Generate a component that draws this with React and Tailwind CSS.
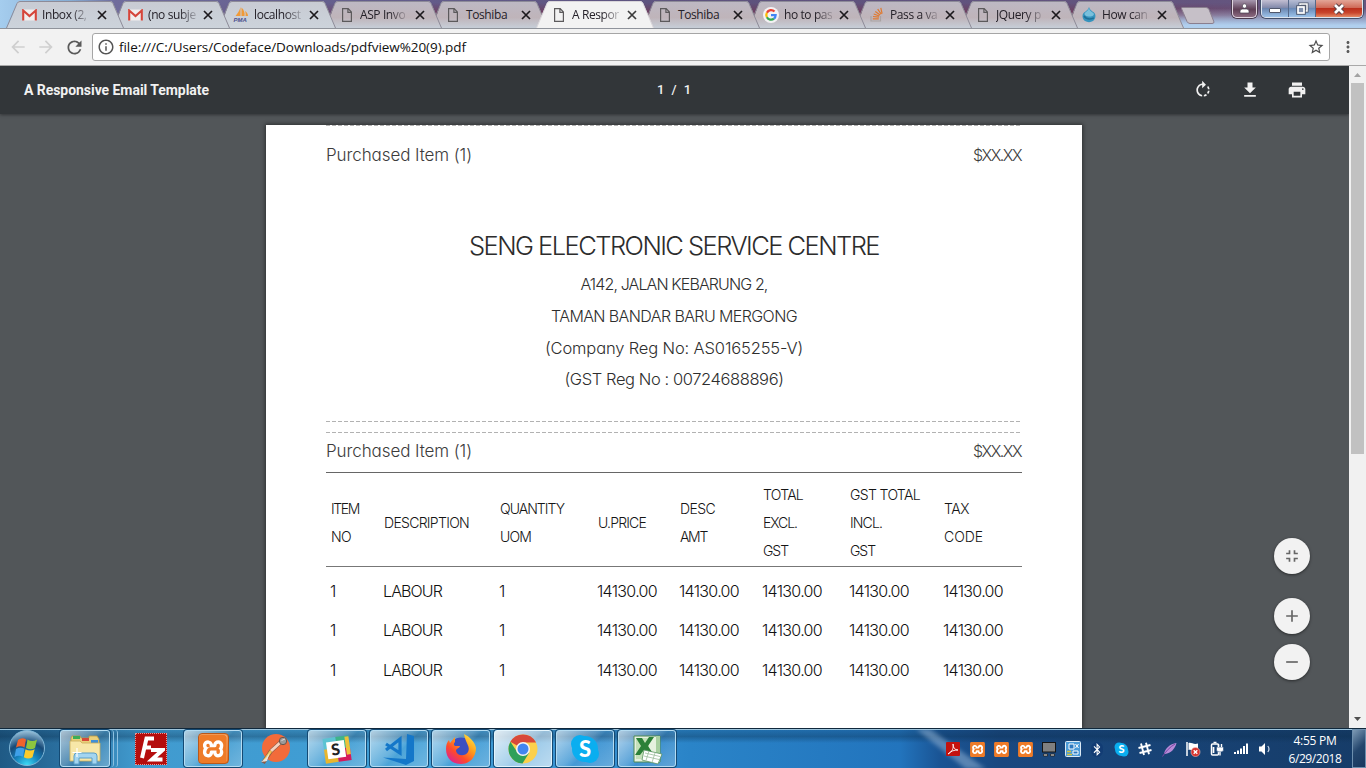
import { useLayoutEffect, useRef } from "react";
import {
  MdArrowBack,
  MdArrowForward,
  MdRefresh,
  MdInfoOutline,
  MdStarBorder,
  MdMoreVert,
  MdRotateRight,
  MdGetApp,
  MdPrint,
  MdFullscreenExit,
  MdAdd,
  MdRemove,
} from "react-icons/md";
import { FaBluetoothB } from "react-icons/fa";
import { SiXampp } from "react-icons/si";

/* Text spread over a fixed measure: the tracking is derived from the natural width. */
function Fit({ w, className = "", children }) {
  const ref = useRef(null);
  useLayoutEffect(() => {
    const el = ref.current;
    el.style.letterSpacing = "0px";
    const natural = el.getBoundingClientRect().width;
    el.style.letterSpacing = (w - natural) / children.length + "px";
  }, [w, children]);
  return (
    <span ref={ref} className={"inline-block whitespace-nowrap " + className}>
      {children}
    </span>
  );
}

/* ---------- tab icons ---------- */
const Gmail = () => (
  <svg width="15" height="12" viewBox="0 0 15 12">
    <rect x="0.5" y="0.5" width="14" height="11" rx="1" fill="#f1eeee" />
    <path d="M1.2 11.5V1.5L7.5 7l6.3-5.500v10" fill="none" stroke="#d5453a" strokeWidth="2.1" />
  </svg>
);
const Doc = () => (
  <svg width="12" height="14" viewBox="0 0 12 14" fill="none" stroke="#5c5a5c" strokeWidth="1.2">
    <path d="M1.600.7h5.600L10.400 4v9.300H1.600zM6.900.9v3.500h3.500" />
  </svg>
);
const Pma = () => (
  <svg width="17" height="15" viewBox="0 0 17 15">
    <path d="M7.500 0v9H2.500C4.500 6.500 6.500 4 7.500 0zM8.500.5C11 2.500 12 6 11.500 9H8.500zM12 4c2 1 3 3 3 5h-2.500c.3-2 .2-3.500-.5-5z" fill="#f09a38" />
    <text x="0.500" y="14.800" fontSize="6" fontWeight="700" fontStyle="italic" fontFamily="Liberation Sans, sans-serif" fill="#4a4f8c">
      PMA
    </text>
  </svg>
);
const Google = () => (
  <svg width="16" height="16" viewBox="0 0 16 16" fill="none" strokeWidth="2.300">
    <circle cx="8" cy="8" r="8" fill="#f4f2f4" />
    <path d="M11.500 4.500A4.700 4.700 0 0 0 3.900 5.700" stroke="#ea4335" />
    <path d="M3.900 5.700a4.700 4.700 0 0 0 0 4.600" stroke="#fbbc05" />
    <path d="M3.900 10.300a4.700 4.700 0 0 0 7.100 1.300" stroke="#34a853" />
    <path d="M11 11.600A4.700 4.700 0 0 0 12.600 8.200H8" stroke="#4285f4" />
  </svg>
);
const Stack = () => (
  <svg width="14" height="15" viewBox="0 0 14 15" fill="none">
    <path d="M1 9v5h9.500V9" stroke="#a9a3a3" strokeWidth="1.200" />
    <path d="M2.800 11.800h6M3 9.500l5.900.7M3.700 7l5.600 2M5.300 4.500l4.800 3.500M7.700 2.200l3.500 4.900M10.800.8l1.300 5.800" stroke="#e0792f" strokeWidth="1.200" />
  </svg>
);
const Drop = () => (
  <svg width="16" height="16" viewBox="0 0 16 16">
    <path d="M8 0c.8 3 3 4 5 5.500 2.500 2 1.500 7-1 8.500-2.500 1.500-5.500 1.500-8 0C1.500 12.500.500 7.500 3 5.500 5 4 7.200 3 8 0z" fill="#3593bd" />
    <path d="M8 1c.6 3 3 4 4.500 5.300C14 8 11 10 7.500 9.500 4 9 3 7 3.800 6 5 4.500 7.300 3.500 8 1z" fill="#79c0dc" />
    <path d="M3 9c2 3 6 3.500 9.800 2" stroke="#1d6f98" strokeWidth="1.500" fill="none" />
  </svg>
);

const tabs = [
  { icon: Gmail, title: "Inbox (2," },
  { icon: Gmail, title: "(no subje" },
  { icon: Pma, title: "localhost" },
  { icon: Doc, title: "ASP Invo" },
  { icon: Doc, title: "Toshiba" },
  { icon: Doc, title: "A Respor", active: true },
  { icon: Doc, title: "Toshiba" },
  { icon: Google, title: "ho to pas" },
  { icon: Stack, title: "Pass a va" },
  { icon: Doc, title: "JQuery p" },
  { icon: Drop, title: "How can" },
];

function Tab({ icon: Icon, title, active, order }) {
  const fade = title === "Toshiba" ? "" : " [mask-image:linear-gradient(to_right,black_65%,transparent_110%)]";
  return (
    <div className="relative h-[29px] w-[106px] shrink-0" style={{ zIndex: active ? 30 : 20 - order }}>
      <svg className="absolute left-0 top-0" width="119" height="29" viewBox="0 0 119 29">
        <path
          d={active ? "M0 29L11 3Q12 1 14 1H104Q106 1 107 3L118 29Z" : "M6.500 16L11 3Q12 1 14 1H104Q106 1 107 3L118 28.500H0.500Z"}
          fill={active ? "#f2f2f2" : order < 3 ? "url(#tabCool)" : "url(#tabGlass)"}
        />
        <path d="M0.500 28L11 3.500Q12 1.500 14 1.500H104Q106 1.500 107 3.500L117.500 28" fill="none" stroke={active ? "#d9d6da" : "#8d8b98"} strokeWidth="1" />
      </svg>
      <div className="relative flex h-[29px] items-center pl-[14px]">
        <span className="flex w-[18px] items-center justify-center">
          <Icon />
        </span>
        <span className="ml-[4px] w-[50px] shrink-0">
          <span className={"block w-max whitespace-nowrap text-[12px] tracking-[-0.4px] text-[#252129]" + fade}>{title}</span>
        </span>
        <svg className="ml-[5px] mt-px shrink-0" width="10" height="10" viewBox="0 0 10 10" stroke={active ? "#3c3c3c" : "#1c191d"} strokeWidth="1.700">
          <path d="M1 1l8 8M9 1L1 9" />
        </svg>
      </div>
    </div>
  );
}

function TabStrip() {
  return (
    <div className="relative flex h-[29px] overflow-hidden border-b border-[#8f939b] bg-[linear-gradient(to_right,#a5cdee_0,#86add4_70px,#706c9c_115px,#65608f_300px,#5d527d_700px,#66557f_1366px)] pl-[6px]">
      <div className="absolute inset-0 bg-[linear-gradient(to_bottom,transparent_10%,#7a3048_55%,#a8c8e8_100%)] opacity-75 [mask-image:linear-gradient(to_right,transparent_14%,black_30%,black_84%,#0008_90%,transparent)]" />
      <div className="absolute right-0 top-0 h-full w-[190px] bg-[linear-gradient(to_bottom,transparent_30%,#b0cfee_90%)]" />
      <svg className="absolute" width="0" height="0">
        <defs>
          <linearGradient id="tabCool" x1="0" y1="0" x2="0" y2="1">
            <stop offset="0" stopColor="#c8cbd3" />
            <stop offset="1" stopColor="#ccd3db" />
          </linearGradient>
          <linearGradient id="tabGlass" x1="0" y1="0" x2="0" y2="1">
            <stop offset="0" stopColor="#bdb9c4" />
            <stop offset="0.600" stopColor="#bfb4ba" />
            <stop offset="1" stopColor="#c7cfd9" />
          </linearGradient>
        </defs>
      </svg>
      {tabs.map((t, i) => (
        <Tab key={i} order={i} {...t} />
      ))}
      <svg className="relative ml-[8px] mt-[7px]" width="36" height="18" viewBox="0 0 36 18">
        <path d="M1.500 1.500Q1 .5 3 .5H26Q28 .5 29 2.500L34 15Q34 16.500 32 16.500H10Q8 16.500 7 14.500Z" fill="#c6c0c8" stroke="#8a7f8f" />
      </svg>
      <div className="absolute right-[3px] top-0 flex gap-[2px]">
        <div className="flex h-[18px] w-[25px] items-center justify-center rounded-b-[5px] border border-t-0 border-[#e0d5df] bg-[linear-gradient(#a697ae,#5f3f56_55%,#8b6a80)] ring-1 ring-[#4a3a4e]">
          <svg width="11" height="11" viewBox="0 0 11 11" fill="#fff" stroke="#4c4454" strokeWidth=".7">
            <circle cx="5.500" cy="3" r="2.200" />
            <path d="M1 10V8q0-2 2.500-2h4Q10 6 10 8v2z" />
          </svg>
        </div>
        <div className="ml-[2px] flex h-[18px] w-[102px] overflow-hidden rounded-b-[5px] border border-t-0 border-[#dde4ef] ring-1 ring-[#44506a]">
          <div className="flex w-[27px] items-center justify-center border-r border-[#56698a] bg-[linear-gradient(#c3bfd2,#7e86a8_48%,#6c86b0_50%,#9cc3ea)]">
            <div className="mt-[3px] h-[5px] w-[12px] rounded-[1px] border border-[#50576b] bg-white" />
          </div>
          <div className="flex w-[27px] items-center justify-center border-r border-[#56698a] bg-[linear-gradient(#b7bdd4,#7e8fb2_48%,#6a8ab8_50%,#9cc3ea)]">
            <svg width="14" height="14" viewBox="0 0 14 14" fill="none">
              <path d="M5 3V2h7v7h-2" stroke="#4c5468" strokeWidth="3" />
              <path d="M5 3V2h7v7h-2" stroke="#fff" strokeWidth="1.500" />
              <rect x="3" y="5" width="6" height="6" stroke="#4c5468" strokeWidth="3.500" />
              <rect x="3" y="5" width="6" height="6" fill="#7f90ae" stroke="#fff" strokeWidth="1.700" />
            </svg>
          </div>
          <div className="flex grow items-center justify-center bg-[linear-gradient(#e3a597,#cf6a58_45%,#bb2f1c_50%,#c9452c_75%,#e58b66)]">
            <svg width="14" height="12" viewBox="0 0 14 12" fill="none">
              <path d="M3 2l8 8M11 2l-8 8" stroke="#5d4045" strokeWidth="4.600" />
              <path d="M3 2l8 8M11 2l-8 8" stroke="#fff" strokeWidth="2.700" />
            </svg>
          </div>
        </div>
      </div>
    </div>
  );
}

function AddressBar() {
  return (
    <div className="flex h-[37px] items-center border-b border-[#a9a9a9] bg-[#f2f2f2] pl-[8px]">
      <MdArrowBack size={20} color="#cfcfcf" />
      <MdArrowForward size={20} color="#cfcfcf" className="ml-[8px]" />
      <MdRefresh size={21} color="#5a5a5a" className="ml-[8px]" />
      <div className="ml-[7px] flex h-[28px] w-[1238px] items-center rounded-[3px] border border-[#a6a6a6] bg-white pl-[4px] pr-[4px]">
        <MdInfoOutline size={18} color="#555" />
        <Fit w={347} className="ml-[4px] text-[13.500px] text-[#111]">
          file:///C:/Users/Codeface/Downloads/pdfview%20(9).pdf
        </Fit>
        <MdStarBorder size={18} color="#4d4d4d" className="ml-auto" />
      </div>
      <MdMoreVert size={18} color="#5a5a5a" className="ml-[9px]" />
    </div>
  );
}

/* ---------- document ---------- */
const Dashes = ({ className = "" }) => (
  <div className={"w-[694px] shrink-0 bg-[repeating-linear-gradient(to_right,#b2b2b2_0,#b2b2b2_4px,transparent_4px,transparent_6px)] " + className} />
);

const Purchased = ({ className = "" }) => (
  <div className={"flex shrink-0 items-center justify-between text-[17px] text-[#3c3c3c] " + className}>
    <Fit w={146} className="pt-[2px]">Purchased Item (1)</Fit>
    <Fit w={48} className="mr-px text-[16px]">$XX.XX</Fit>
  </div>
);

const cols = "grid grid-cols-[53px_116px_98px_82px_83px_87px_94px_83px]";
const head = [
  [["ITEM", 28], ["NO", 20]],
  [["DESCRIPTION", 85]],
  [["QUANTITY", 64], ["UOM", 31]],
  [["U.PRICE", 48]],
  [["DESC", 35], ["AMT", 27]],
  [["TOTAL", 40], ["EXCL.", 34], ["GST", 25]],
  [["GST TOTAL", 70], ["INCL.", 32], ["GST", 25]],
  [["TAX", 25], ["CODE", 39]],
];
const cells = [["1", 6], ["LABOUR", 59], ["1", 6], ["14130.00", 60], ["14130.00", 60], ["14130.00", 60], ["14130.00", 60], ["14130.00", 60]];
const rowHeights = ["h-[40px]", "h-[38px]", "h-[42px]"];

function Page() {
  return (
    <div className="flex h-[603px] w-[816px] flex-col overflow-hidden bg-white px-[60px] font-['Inter','Lato',sans-serif] font-light shadow-[0_0_4px_1px_rgba(0,0,0,0.45)] [font-feature-settings:'cv11']">
      <Dashes className="h-px" />
      <Purchased className="h-[57px]" />
      <div className="mt-[48px] flex shrink-0 flex-col items-center text-[16px] text-[#2e2e2e]">
        <Fit w={410} className="h-[37px] text-[25.500px] leading-[30px] text-[#2c2c2c]">SENG ELECTRONIC SERVICE CENTRE</Fit>
        <Fit w={187} className="leading-[32px]">A142, JALAN KEBARUNG 2,</Fit>
        <Fit w={246} className="leading-[32px]">TAMAN BANDAR BARU MERGONG</Fit>
        <Fit w={258} className="text-[16.500px] leading-[32px]">(Company Reg No: AS0165255-V)</Fit>
        <Fit w={219} className="text-[16.500px] leading-[31px]">(GST Reg No : 00724688896)</Fit>
      </div>
      <Dashes className="mt-[26px] h-px" />
      <Dashes className="mt-[10px] h-px" />
      <Purchased className="h-[36px]" />
      <div className="mt-[3px] h-px shrink-0 bg-[#666]" />
      <div className={cols + " h-[93px] shrink-0 pt-[8px] text-[14px] font-[350] text-[#151515]"}>
        {head.map((lines, i) => (
          <div key={i} className="flex h-[84px] flex-col items-start justify-center pl-[5px]">
            {lines.map(([t, w]) => (
              <Fit key={t} w={w} className="leading-[28px]">{t}</Fit>
            ))}
          </div>
        ))}
      </div>
      <div className="mb-[4px] h-px shrink-0 bg-[#777]" />
      {rowHeights.map((h) => (
        <div key={h} className={cols + " shrink-0 items-center text-[16px] font-[350] text-[#111] " + h}>
          {cells.map(([t, w], c) => (
            <div key={c} className="pl-[4px]">
              <Fit w={w}>{t}</Fit>
            </div>
          ))}
        </div>
      ))}
    </div>
  );
}

const RoundButton = ({ icon: Icon, className = "" }) => (
  <div className={"flex size-[36px] items-center justify-center rounded-full bg-[#f2f2f2] shadow-[0_1px_3px_rgba(0,0,0,0.5)] " + className}>
    <Icon size={20} color="#666" />
  </div>
);

function Viewer() {
  return (
    <div className="relative flex grow flex-col overflow-hidden bg-[#525659]">
      <div className="z-10 flex h-[48px] shrink-0 items-center bg-[#323639] font-['Roboto',sans-serif] text-[#f1f1f1] shadow-[0_1px_3px_rgba(0,0,0,0.4)]">
        <Fit w={185} className="ml-[24px] text-[14px] font-bold">A Responsive Email Template</Fit>
        <Fit w={36} className="ml-[448px] text-[13px] font-medium">1 / 1</Fit>
        <div className="ml-auto mr-[42px] flex gap-[27px]">
          <MdRotateRight size={20} />
          <MdGetApp size={20} />
          <MdPrint size={20} />
        </div>
      </div>
      <div className="ml-[266px] mt-[11px]">
        <Page />
      </div>
      <div className="absolute bottom-[48px] right-[39px] flex flex-col">
        <RoundButton icon={MdFullscreenExit} />
        <RoundButton icon={MdAdd} className="mt-[24px]" />
        <RoundButton icon={MdRemove} className="mt-[10px]" />
      </div>
    </div>
  );
}

function Scrollbar() {
  return (
    <div className="flex w-[17px] flex-col items-center bg-[#f1f1f1]">
      <svg width="17" height="17" viewBox="0 0 17 17">
        <path d="M5 11l3.500-4 3.500 4z" fill="#a3a3a3" />
      </svg>
      <div className="h-[371px] w-[13px] bg-[#c1c1c1]" />
      <svg className="mt-auto" width="17" height="17" viewBox="0 0 17 17">
        <path d="M5 6l3.500 4L12 6z" fill="#505050" />
      </svg>
    </div>
  );
}

/* ---------- taskbar ---------- */
const Explorer = () => (
  <svg width="34" height="32" viewBox="0 0 34 32">
    <path d="M3 5l1-2h8l1 2h8V3h8l2 3v20H3z" fill="#e9cf7a" stroke="#b89a45" strokeWidth=".8" />
    <path d="M5 3h7v3H5z" fill="#3cae57" />
    <path d="M14 5h7v3h-7z" fill="#d64a38" />
    <path d="M23 7h7v3h-7z" fill="#3f8fd8" />
    <path d="M2 8h10l2 2h18v18H2z" fill="#f7e7a8" stroke="#c9ad5c" strokeWidth=".8" />
    <path d="M6 31v-8q0-3 3-3h17q3 0 3 3v8h-5v-6H11v6z" fill="#a3d5f0" stroke="#5b9fc8" />
    <path d="M9 15v9M4.500 19.500h9" stroke="#fff" strokeWidth="1.200" />
  </svg>
);
const Filezilla = () => (
  <div className="flex size-[32px] items-center justify-center border border-dotted border-[#e39a9a] bg-[#b50d0d]">
    <svg width="28" height="28" viewBox="0 0 28 28" fill="none" stroke="#fff" strokeWidth="4">
      <path d="M17 3.500H9.500L5 23M7 12.500h7M14 15h11.500L15 24.500h10.500" />
    </svg>
  </div>
);
const Xampp = () => (
  <span className="flex size-[31px] items-center justify-center rounded-[4px] border border-[#b9581a] bg-[linear-gradient(#f39a55,#e96f1d)]">
    <span className="flex size-[27px] items-center justify-center rounded-[3px] bg-white">
      <SiXampp size={28} color="#ee7b28" className="shrink-0" />
    </span>
  </span>
);
const TrayXampp = () => (
  <span className="flex size-[13px] items-center justify-center rounded-[2px] bg-white">
    <SiXampp size={15} color="#ee7b28" className="shrink-0" />
  </span>
);
const Postman = () => (
  <svg width="32" height="32" viewBox="0 0 32 32">
    <circle cx="17" cy="15" r="14" fill="#f26b3a" />
    <path d="M23 8L12 18l-8 12" stroke="#8a5a48" strokeWidth="4" fill="none" />
    <path d="M23 8L12 18" stroke="#f6d2bd" strokeWidth="3" />
    <path d="M12 18L5 28" stroke="#f3c44a" strokeWidth="2.500" />
    <path d="M11 19l-4 6-5 4 6-1" fill="#e8e2de" />
    <circle cx="24" cy="8" r="3.700" fill="#9c9a99" stroke="#66554d" />
    <path d="M22.500 7.500l3.500-1.500" stroke="#ddd" />
  </svg>
);
const Slack = () => (
  <svg width="30" height="30" viewBox="0 0 30 30">
    <g transform="rotate(-8 15 15)">
      <rect x="2" y="3" width="13" height="11" fill="#5cc3d2" />
      <rect x="15" y="3" width="13" height="12" fill="#3fb489" />
      <rect x="2" y="14" width="13" height="14" fill="#e9b62f" />
      <rect x="15" y="15" width="13" height="13" fill="#d5195b" />
      <rect x="24" y="4" width="4" height="18" fill="#edc13b" />
      <rect x="5" y="7" width="18" height="17" fill="#fff" />
      <text x="9" y="21" fontSize="16" fontWeight="900" fontFamily="Lato, sans-serif" fill="#222">S</text>
    </g>
  </svg>
);
const VsCode = () => (
  <svg width="34" height="32" viewBox="0 0 34 32">
    <path d="M25 1l7 2v25l-8 4L1 24.500l23 1.500z" fill="#1477c9" />
    <path d="M4 11l14 9V6L4 17" fill="none" stroke="#1477c9" strokeWidth="3.200" />
  </svg>
);
const Firefox = () => (
  <svg width="32" height="32" viewBox="0 0 32 32">
    <defs>
      <linearGradient id="fx" x1="1" y1="0" x2="0.200" y2="1">
        <stop offset="0" stopColor="#fff14a" />
        <stop offset=".4" stopColor="#ffa01c" />
        <stop offset=".7" stopColor="#ff4a2a" />
        <stop offset="1" stopColor="#d8209a" />
      </linearGradient>
    </defs>
    <circle cx="16" cy="16" r="11.500" fill="#3b4fc0" />
    <path d="M19 1c6 3 11 8 12 14 0 9-6 16-15 16S1 25 1 16c0-4 1-7 3-9l1 3 5-6v5c-2 2-1 4 1 4h4c-1 3-4 2-4 5 1 5 9 6 12 1 3-5-3-10-4-18z" fill="url(#fx)" />
  </svg>
);
const Chrome = () => (
  <svg width="32" height="32" viewBox="0 0 32 32">
    <circle cx="16" cy="16" r="14.500" fill="#fcd04c" />
    <path d="M16 16L3.400 8.800A14.500 14.500 0 0 1 28.600 8.800L29 9.500H16z" fill="#d8493a" />
    <path d="M3.400 8.800A14.500 14.500 0 0 0 15.500 30.500L22 20 10.500 19.500z" fill="#2ea05a" />
    <circle cx="16" cy="16" r="7" fill="#f4f4f4" />
    <circle cx="16" cy="16" r="5.500" fill="#4286f0" />
  </svg>
);
const Skype = ({ size = 30 }) => (
  <svg width={size} height={size} viewBox="0 0 30 30">
    <circle cx="10" cy="10" r="9" fill="#0aaef0" />
    <circle cx="20" cy="20" r="9" fill="#0aaef0" />
    <circle cx="15" cy="15" r="13" fill="#0aaef0" />
    <text x="15" y="22.500" textAnchor="middle" fontSize="22" fontWeight="900" fontFamily="Lato, sans-serif" fill="#fff">S</text>
  </svg>
);
const Excel = () => (
  <svg width="32" height="32" viewBox="0 0 32 32">
    <path d="M3 3h26v26H3z" fill="#e6f1df" stroke="#4f8a55" />
    <path d="M5 5h13v21H5z" fill="#c5e0b9" />
    <path d="M25 3h4v26h-4z" fill="#a8cfa0" />
    <path d="M5 5h6l3 5 4-6h5l-6 9 6 9h-6l-4-5-4 5H4l6-9z" fill="#2b8038" />
    <path d="M13 17l18 4-4 10-16-4z" fill="#fff" stroke="#5a9461" strokeWidth=".8" />
    <path d="M14 20l15 3.500M13 23l15 3.500M18 18l-3 9.500M24 20l-3 9.500" stroke="#9dbd9d" strokeWidth=".8" />
  </svg>
);

const apps = [
  { icon: Filezilla, look: "plain" },
  { icon: Xampp, look: "glass" },
  { icon: Postman, look: "plain" },
  { icon: Slack, look: "glass" },
  { icon: VsCode, look: "glass" },
  { icon: Firefox, look: "glass" },
  { icon: Chrome, look: "bright" },
  { icon: Skype, look: "glass" },
  { icon: Excel, look: "glass" },
];
const looks = {
  plain: "",
  glass:
    "rounded-[3px] border border-[#b4dcf2] bg-[linear-gradient(135deg,#ffffffa0_0,#ffffff38_45%,#ffffff10_55%,#ffffff40_100%)] ring-1 ring-[#144a74]",
  bright:
    "rounded-[3px] border border-[#e4f5fd] bg-[linear-gradient(135deg,#ffffffd8_0,#ffffff90_50%,#ffffff80_55%,#ffffffa8_100%)] ring-1 ring-[#144a74]",
};

const Adobe = () => (
  <svg width="14" height="14" viewBox="0 0 14 14">
    <rect width="14" height="14" rx="1" fill="#c4120e" />
    <path d="M2 12c4-2 6-6 5-10 0 4 2 6 5 6-4 0-7 1-10 4z" fill="none" stroke="#fff" strokeWidth=".9" />
  </svg>
);
const Computer = () => (
  <svg width="16" height="15" viewBox="0 0 16 15">
    <rect x="1.500" y=".5" width="13" height="9.500" fill="#808080" stroke="#151515" />
    <path d="M2.500 12h4v2h-4zM9.500 12h4v2h-4z" fill="#ccc" stroke="#222" strokeWidth=".8" />
  </svg>
);
const Intel = () => (
  <svg width="16" height="16" viewBox="0 0 16 16">
    <rect x=".5" y=".5" width="15" height="15" rx="1" fill="#4b9bd8" stroke="#dceaf5" />
    <path d="M4 3h5v5H4zM8 10h5v3H8z" fill="#2b78c0" stroke="#fff" />
    <path d="M10.500 3l3 4M13.500 3l-3 4" stroke="#fff" fill="none" />
    <path d="M2 10.500h4M2 13.500h5" stroke="#d9c23c" strokeWidth="1.300" />
  </svg>
);
const Bluetooth = () => (
  <span className="flex h-[15px] w-[12px] items-center justify-center rounded-full bg-[#123c74]">
    <FaBluetoothB size={13} color="#fff" />
  </span>
);
const TraySkype = () => <Skype size={15} />;
const Hash = () => (
  <svg width="14" height="14" viewBox="0 0 14 14" stroke="#fff" strokeWidth="1.900">
    <path d="M3 1.500l3 11.500M8 .8l3 11.500M.5 6l12-3M1.500 11l12-3" />
  </svg>
);
const Feather = () => (
  <svg width="15" height="15" viewBox="0 0 15 15">
    <path d="M2 12C3 6 8 2 14.500 1 13 7 9 11 3 12z" fill="#b78ad8" />
    <path d="M.5 14.500C4 9 8 5 13 2" stroke="#7a46a3" fill="none" />
  </svg>
);
const Flag = () => (
  <svg width="16" height="16" viewBox="0 0 16 16">
    <path d="M2 1v14" stroke="#fff" strokeWidth="1.500" />
    <path d="M3.500 2c3-1 5 2 9.500.5v7C9 11 6.500 8 3.500 9z" fill="#fff" />
    <circle cx="10.500" cy="11" r="4.500" fill="#d7322c" stroke="#f4c5c0" strokeWidth=".6" />
    <path d="M8.700 9.200l3.600 3.600M12.300 9.200l-3.600 3.600" stroke="#fff" strokeWidth="1.400" />
  </svg>
);
const Power = () => (
  <svg width="14" height="16" viewBox="0 0 14 16" fill="none">
    <rect x="1.500" y="3" width="7" height="11" rx="1" stroke="#fff" strokeWidth="1.500" />
    <path d="M3.500 1.500h3M3.500 6v6" stroke="#fff" strokeWidth="1.700" />
    <path d="M6.500 6h7v3q0 2-3.500 2t-3.500-2z" fill="#fff" stroke="#1c4577" strokeWidth=".6" />
    <path d="M8.500 3v3M11.500 3v3M10 11v3.500" stroke="#fff" strokeWidth="1.400" />
  </svg>
);
const Signal = () => (
  <svg width="16" height="12" viewBox="0 0 16 12" fill="#fff">
    <path d="M1 9h2v2H1zM4 7.500h2V11H4zM7 5.500h2V11H7zM10 3h2v8h-2zM13 .5h2V11h-2z" />
  </svg>
);
const Volume = () => (
  <svg width="14" height="14" viewBox="0 0 14 14">
    <path d="M1 4.500h2.500L7 1v12L3.500 9.500H1z" fill="#fff" />
    <path d="M9.800 4q2.400 3 0 6" fill="none" stroke="#cfdcec" strokeWidth="1.200" />
  </svg>
);
const tray = [Adobe, TrayXampp, TrayXampp, TrayXampp, Computer, Intel, Bluetooth, TraySkype, Hash, Feather, Flag, Power, Signal, Volume];

const StartOrb = () => (
  <svg width="38" height="38" viewBox="0 0 38 38">
    <defs>
      <radialGradient id="orb" cx=".5" cy="1" r="1">
        <stop offset="0" stopColor="#3fe0f8" />
        <stop offset=".35" stopColor="#1683bd" />
        <stop offset=".65" stopColor="#174a78" />
        <stop offset="1" stopColor="#9ec6de" />
      </radialGradient>
    </defs>
    <circle cx="19" cy="19" r="17.500" fill="url(#orb)" stroke="#7fb7d8" />
    <path d="M10 11q4-3 8-.5l-1.500 8q-4-2.500-8.500 0z" fill="#f0642c" />
    <path d="M19.500 10.500q5 3 9.500 0l-2 8.500q-4 2.500-9 0z" fill="#8dc63f" />
    <path d="M8 20q4-2.500 8.500-.2l-1.700 8q-4-2-8.300.2z" fill="#3fa0e8" />
    <path d="M17.500 20.200q4.500 2.500 9.200 0l-2.200 8q-4 2.500-8.700 0z" fill="#fccb2c" />
  </svg>
);

function Taskbar() {
  return (
    <div className="relative flex h-[40px] shrink-0 overflow-hidden border-t border-[#10283c] bg-[linear-gradient(to_right,#1f5a85_0,#2a6f9f_60px,#419bcf_140px,#3f9ed6_420px,#3791d2_600px,#2a84c8_690px,#2274bd_900px,#1a5494_940px,#194880_1000px,#163c68_1366px)]">
      <div className="absolute inset-x-0 top-0 h-[14px] border-t border-[#9cc4dc] bg-[linear-gradient(to_bottom,#0a2c4a30,#0a2c4a60_50%,transparent)]" />
      <svg className="absolute left-[900px] top-0" width="110" height="40">
        <path d="M16 0L66 40H86L30 0z" fill="#a9c6e2" opacity=".45" className="blur-[2px]" />
      </svg>
      <div className="relative ml-[8px] w-[38px]">
        <StartOrb />
      </div>
      <div className="relative ml-[14px] flex gap-px pt-px">
        <div className={"flex h-[37px] w-[50px] items-center justify-center " + looks.glass}>
          <Explorer />
        </div>
        <div className="h-[37px] w-[3px] rounded-r border-r border-[#8cc0e0]" />
        <div className="h-[37px] w-[3px] rounded-r border-r border-[#8cc0e0]" />
      </div>
      <div className="relative ml-[4px] flex gap-[4px] pt-px">
        {apps.map(({ icon: Icon, look }, i) => (
          <div key={i} className={"flex h-[37px] w-[58px] items-center justify-center " + looks[look]}>
            <Icon />
          </div>
        ))}
      </div>
      <div className="relative ml-auto flex items-center">
        {tray.map((Icon, i) => (
          <span key={i} className="flex w-[24px] justify-center pt-px">
            <Icon />
          </span>
        ))}
      </div>
      <div className="relative ml-[11px] flex w-[54px] flex-col items-center pt-[3px] text-[12px] leading-[18px] text-white">
        <Fit w={43}>4:55 PM</Fit>
        <Fit w={53}>6/29/2018</Fit>
      </div>
      <div className="relative ml-[10px] w-[14px] border border-[#6d8fae] bg-[linear-gradient(135deg,#7d9ab5,#24466d_50%,#17375e)]" />
    </div>
  );
}

export default function App() {
  return (
    <div className="flex h-[768px] w-[1366px] flex-col overflow-hidden bg-[#525659] font-['Open_Sans','Noto_Sans',sans-serif]">
      <TabStrip />
      <AddressBar />
      <div className="flex min-h-0 grow">
        <Viewer />
        <Scrollbar />
      </div>
      <Taskbar />
    </div>
  );
}
